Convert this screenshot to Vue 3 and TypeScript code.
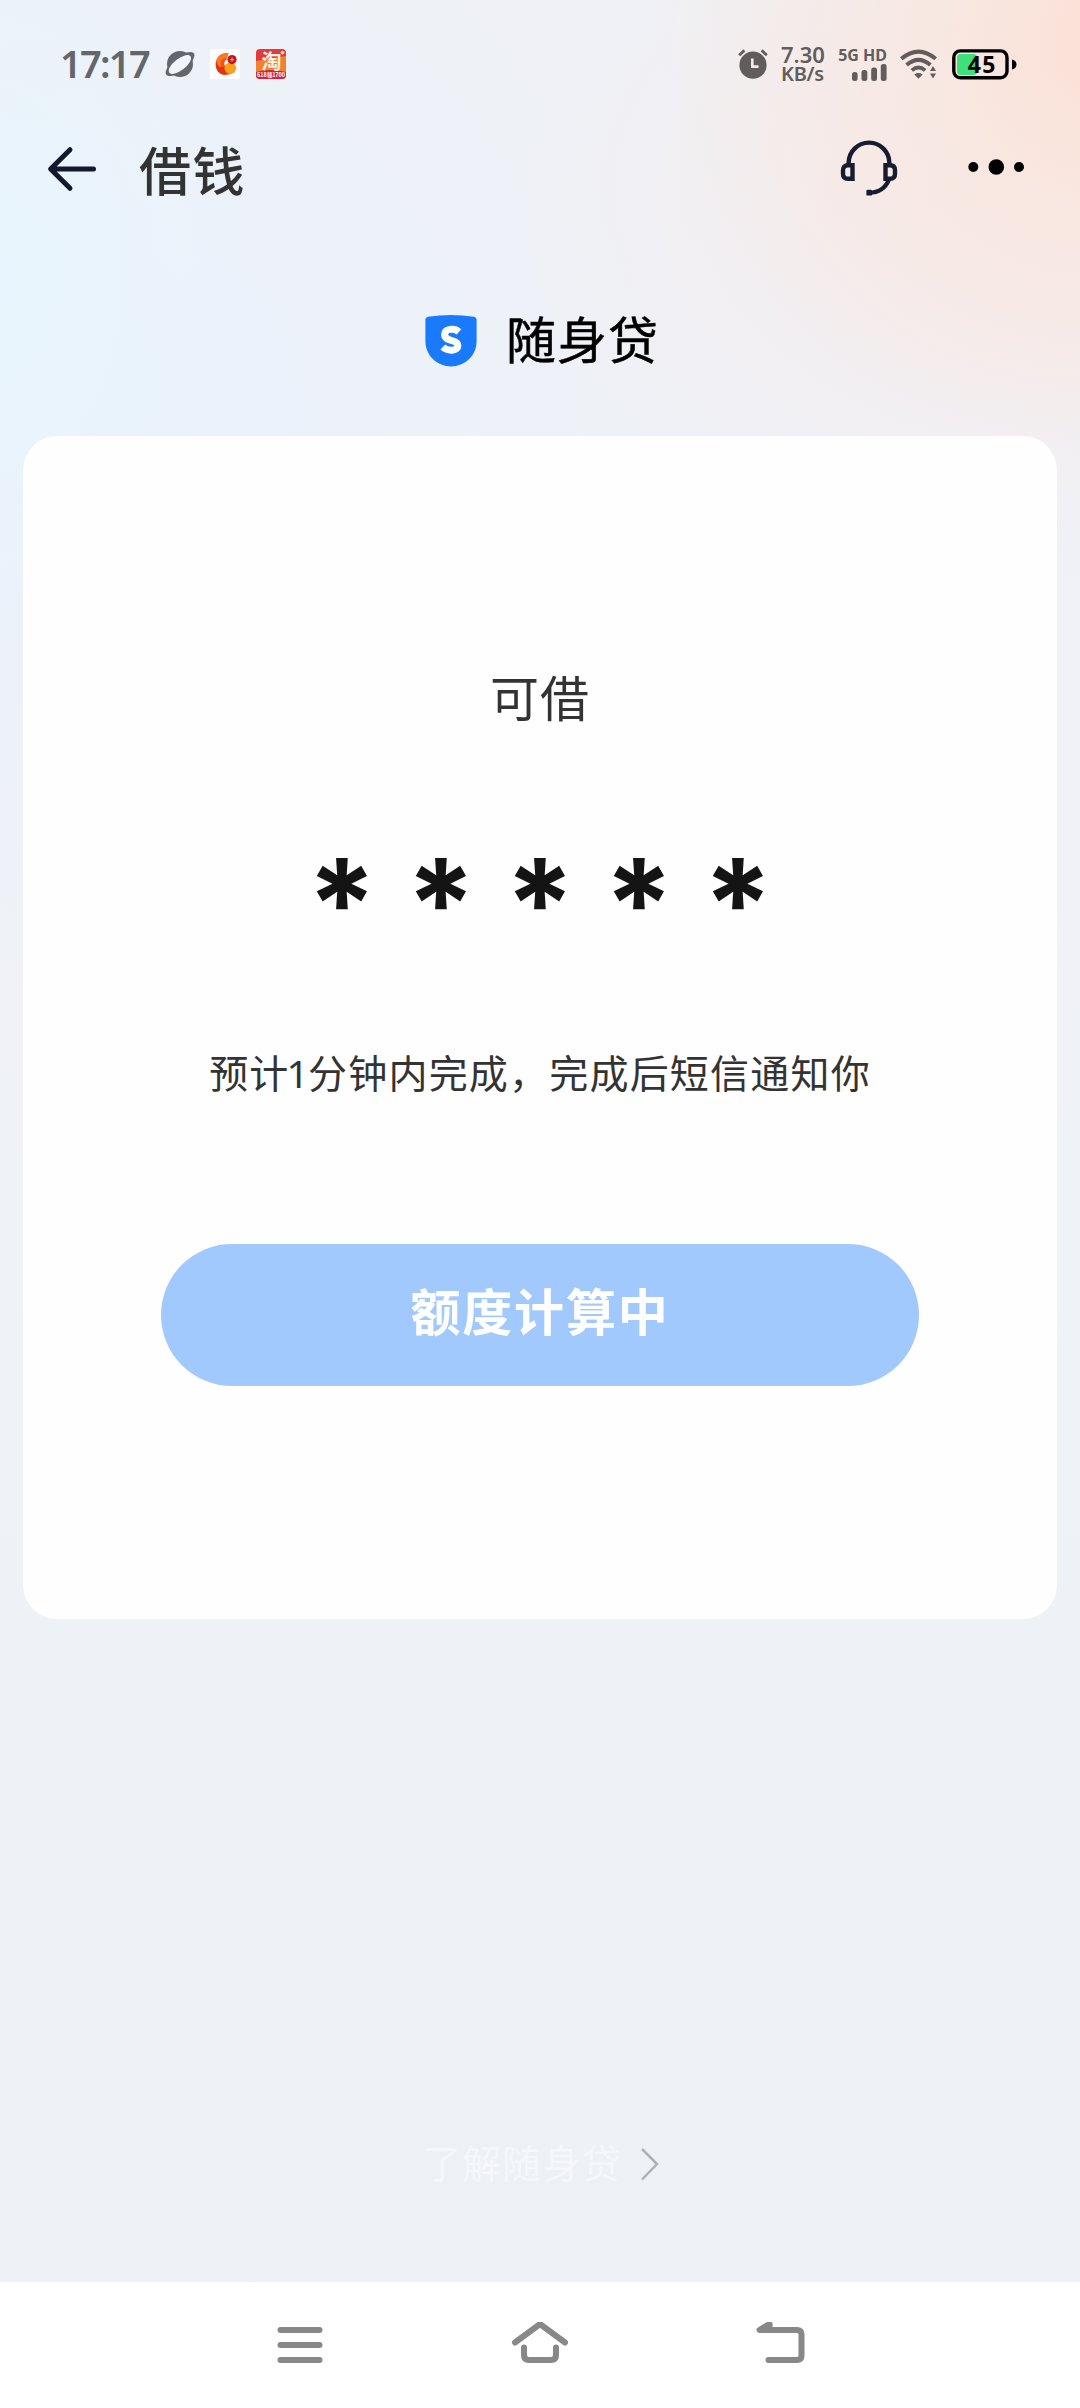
<script setup lang="ts">
const mask: string[] = ['*', '*', '*', '*', '*']
const navLines: number[] = [8, 23, 38]
</script>

<template>
  <div class="page">
    <div class="status">
      <span class="time">17:17</span>
      <svg class="planet" width="30" height="28" viewBox="0 0 30 28">
        <circle cx="15" cy="14" r="13" fill="#63666b" />
        <ellipse cx="15" cy="14" rx="17.4" ry="7" transform="rotate(-38 15 14)" fill="#63666b" />
        <ellipse cx="14.6" cy="14.3" rx="13.4" ry="5.8" transform="rotate(-38 15 14)" fill="#f0f4fb" />
      </svg>
      <svg class="app-a" width="30" height="30" viewBox="0 0 30 30">
        <rect width="30" height="30" rx="3" fill="#fff" />
        <path d="M18.500 4.200A10.600 10.600 0 0 0 6 12.500C4.800 19 8 25.500 15 25.800L17.500 19C13.500 17 13.500 12.500 16.500 10.500Z" fill="#f4501c" />
        <path d="M6 12.500C4.800 19 8 25.500 15 25.800C19.500 26 23 24.500 24.500 22L17 17.500Q10 20 6 12.500z" fill="#e5301a" />
        <circle cx="20.300" cy="19.200" r="5.800" fill="#fba01c" />
        <path d="M7 9.500C10 5.500 14 4 18.500 4.200L16.500 9C11 9 9.500 13 11.500 18.500C7.500 17 6 13 7 9.500z" fill="#fa7a1e" />
        <circle cx="22" cy="10.600" r="4.600" fill="#c81422" />
        <path d="M22 8.600v4M20 10.600h4" stroke="#f9a23a" stroke-width="1.200" />
      </svg>
      <svg class="app-b" width="30" height="30" viewBox="0 0 30 30">
        <rect width="30" height="30" rx="4" fill="#e23a3a" />
        <path d="M0 12L30 7v16H0z" fill="#f0812f" />
        <path d="M0 23q15-4 30 0v3q0 4-4 4H4q-4 0-4-4z" fill="#d6203f" />
        <circle cx="26.500" cy="3.600" r="1.900" fill="#f7c9b0" />
        <text x="15.500" y="20" text-anchor="middle" class="tao">淘</text>
        <text x="15" y="28" text-anchor="middle" class="promo">618领1700</text>
      </svg>
      <span class="grow"></span>
      <svg class="alarm" width="30" height="30" viewBox="0 0 30 30">
        <circle cx="15" cy="16.200" r="13.600" fill="#625d5d" />
        <path d="M1.200 6.200l5.200-4.800M28.800 6.200l-5.200-4.800" stroke="#625d5d" stroke-width="2.800" />
        <path d="M14.300 9.400v8.200h6.200" fill="none" stroke="#f6eae8" stroke-width="2.600" />
      </svg>
      <div class="speed"><span>7.30</span><span class="unit">KB/s</span></div>
      <div class="signal">
        <span>5G HD</span>
        <svg width="35" height="17" viewBox="0 0 35 17">
          <g fill="#625d5d">
            <rect x="0" y="8" width="5.600" height="9" rx="2.500" />
            <rect x="9.500" y="6" width="5.800" height="11" rx="2.500" />
            <rect x="19.200" y="3.600" width="5.800" height="13.400" rx="2.500" />
            <rect x="28.800" y="0" width="5.800" height="17" rx="2.500" />
          </g>
        </svg>
      </div>
      <svg class="wifi" width="37" height="30" viewBox="0 0 37 30">
        <g fill="none" stroke="#625d5d" stroke-width="4">
          <path d="M1.300 9.800Q18.500-4.600 35.700 9.800" />
          <path d="M6.600 16Q18.500 5.600 30.400 16" />
          <path d="M11.800 21.400Q18.500 15.600 25.200 21.400" stroke-width="3.700" />
        </g>
        <path d="M14.400 25.400q4.100-2.600 8.200 0l-4.100 4.400z" fill="#625d5d" />
        <path d="M30 22l3-5 3 5zM30 24.500h6l-3 5z" fill="#625d5d" />
      </svg>
      <svg class="battery" width="65" height="31" viewBox="0 0 65 31">
        <rect x="5" y="5" width="20" height="21" rx="3.500" fill="#3fe07c" />
        <rect x="1.800" y="1.900" width="53.200" height="26.900" rx="6.500" fill="none" stroke="#000" stroke-width="3.400" />
        <path d="M60 10.500q4.500 1 4.500 5t-4.500 5z" fill="#000" />
        <text x="30.300" y="23.700" text-anchor="middle" class="level">45</text>
      </svg>
    </div>

    <header class="bar">
      <svg width="50" height="50" viewBox="0 0 50 50" class="back">
        <path d="M24 5.700L4.600 25 24 44.300M5.500 25H47.500" fill="none" stroke="#14182e" stroke-width="5" stroke-linecap="round" stroke-linejoin="round" />
      </svg>
      <h1>借钱</h1>
      <span class="grow"></span>
      <svg width="58" height="58" viewBox="0 0 58 58" class="service">
        <g fill="none" stroke="#171c31" stroke-width="4.400">
          <path d="M8.600 24.500V23a20.400 20.400 0 0 1 40.800 0v1.500" />
          <path d="M12.500 25.200H8q-5 0-5 5v3.600q0 5 5 5h4.500z" />
          <path d="M45.500 25.200H50q5 0 5 5v3.600q0 5-5 5h-4.500z" />
          <path d="M49 39.500Q43.500 52.700 29 52.700" />
        </g>
        <rect x="26.400" y="49.800" width="5.600" height="5.800" rx="1.200" fill="#171c31" />
      </svg>
      <svg width="58" height="18" viewBox="0 0 58 18" class="more">
        <circle cx="6.300" cy="9" r="5" /><circle cx="29.300" cy="9" r="7.800" /><circle cx="52" cy="9" r="5" />
      </svg>
    </header>

    <div class="brand">
      <svg width="52" height="52" viewBox="0 0 52 52">
        <path d="M.4 4.600Q.4 2.300 3 1.700Q26-1.500 49 1.700Q51.600 2.300 51.600 4.600V26C51.600 41 39.500 51.400 26 51.400S.4 41 .4 26z" fill="#1a7afc" />
        <path d="M34 16.800C29.500 12.800 19.600 13.400 19.600 19.600C19.600 27 32.800 24 32.800 30.700C32.800 36.400 22.500 36.400 17.800 32" fill="none" stroke="#fff" stroke-width="7" />
      </svg>
      <span>随身贷</span>
    </div>

    <main class="card">
      <p class="label">可借</p>
      <div class="amount"><span v-for="(m, i) in mask" :key="i">{{ m }}</span></div>
      <p class="hint">预计<span class="one">1</span>分钟内完成，完成后短信通知你</p>
      <button class="cta">额度计算中</button>
    </main>

    <footer class="more-link">
      <span>了解随身贷</span>
      <svg width="20" height="34" viewBox="0 0 20 34">
        <path d="M2 2l15 15L2 32.500" fill="none" stroke="#aeb0b4" stroke-width="2.500" />
      </svg>
    </footer>

    <nav class="sysnav">
      <svg width="50" height="46" viewBox="0 0 50 46">
        <path v-for="y in navLines" :key="y" :d="`M5.500 ${y}H44.500`" />
      </svg>
      <svg width="60" height="46" viewBox="0 0 60 46">
        <path d="M5 20L30 1.500 55 20" transform="translate(0 .5)" />
        <path d="M14 25.500V33q0 5 5 5h22q5 0 5-5V25.500" />
      </svg>
      <svg width="50" height="46" viewBox="0 0 50 46">
        <path d="M14.500 2L4.500 8H42Q46.500 8 46.500 12.500V33.500Q46.500 38 42 38H13.500" />
        <path d="M14.500 3.500L8 7.500" />
      </svg>
    </nav>
  </div>
</template>

<style>
body {
  margin: 0;
}
</style>

<style scoped>
.page {
  box-sizing: border-box;
  width: 1080px;
  height: 2408px;
  display: flex;
  flex-direction: column;
  overflow: hidden;
  font-family: "Noto Sans CJK SC", "Noto Sans", sans-serif;
  background:
    radial-gradient(ellipse 460px 420px at 1120px 40px, #fbe0d5 0%, rgba(250, 229, 220, 0.7) 40%, rgba(248, 236, 233, 0) 100%),
    radial-gradient(ellipse 560px 380px at 1080px 200px, rgba(247, 234, 232, 0.9) 0%, rgba(245, 237, 238, 0) 100%),
    radial-gradient(ellipse 280px 380px at -30px 270px, rgba(231, 246, 254, 0.85) 0%, rgba(233, 245, 254, 0) 100%),
    radial-gradient(ellipse 560px 560px at 100px 420px, #eaf2fc 0%, rgba(236, 243, 251, 0) 100%),
    linear-gradient(180deg, #eff1f6 0, #eff2f7 1200px, #edf1f6 100%);
}
p,
h1 {
  margin: 0;
  font-weight: 400;
}
svg {
  display: block;
  flex: none;
}
.grow {
  flex: 1;
}
.status {
  display: flex;
  align-items: center;
  height: 128px;
  padding: 0 63px 0 60px;
  box-sizing: border-box;
  color: #625d5d;
  font-family: "Noto Sans", sans-serif;
}
.time {
  width: 105px;
  padding-bottom: 3px;
  font-size: 38px;
  font-weight: 600;
  letter-spacing: -1.7px;
  line-height: 60px;
  color: #63666b;
}
.app-a {
  margin-left: 15px;
}
.app-b {
  margin-left: 16px;
}
.tao {
  font: 700 20px "Noto Sans CJK SC", sans-serif;
  fill: #fff3e2;
}
.promo {
  font: 700 5.5px "Noto Sans CJK SC", sans-serif;
  fill: #fff;
}
.speed {
  display: flex;
  flex-direction: column;
  width: 46px;
  margin-left: 13px;
  font-size: 22px;
  font-weight: 600;
  line-height: 20px;
}
.unit {
  font-size: 20px;
  letter-spacing: -0.3px;
}
.signal {
  display: flex;
  flex-direction: column;
  align-items: flex-end;
  width: 50px;
  margin-left: 10px;
  padding-bottom: 1px;
  font-size: 16px;
  font-weight: 700;
  line-height: 17px;
  white-space: nowrap;
}
.wifi {
  margin-left: 13px;
}
.battery {
  margin-left: 15px;
}
.level {
  font: 700 23px "Noto Sans", sans-serif;
  letter-spacing: 1.5px;
  fill: #000;
}
.bar {
  display: flex;
  align-items: center;
  height: 82px;
  padding: 0 55px 0 46px;
}
.bar h1 {
  margin-left: 43px;
  padding-bottom: 1px;
  font-size: 52px;
  font-weight: 500;
  letter-spacing: 1.5px;
  line-height: 80px;
  color: #333;
}
.more {
  margin: 0 0 4px 69px;
}
.brand {
  display: flex;
  align-items: center;
  gap: 29px;
  height: 60px;
  margin: 101px 0 0 425px;
  font-size: 50px;
  letter-spacing: 1px;
  color: #000;
}
.brand span {
  padding-bottom: 8px;
  -webkit-text-stroke: 0.5px #000;
}
.card {
  display: flex;
  flex-direction: column;
  align-items: center;
  box-sizing: border-box;
  width: 1034px;
  height: 1183px;
  margin: 65px 23px 0;
  padding-top: 220px;
  border-radius: 34px;
  background: #fefefe;
}
.label {
  font-size: 49px;
  letter-spacing: 1px;
  line-height: 80px;
  color: #333;
}
.amount {
  display: flex;
  height: 100px;
  margin-top: 118px;
  font-family: Inter, sans-serif;
  font-size: 125px;
  font-weight: 700;
  line-height: 100px;
  color: #141414;
}
.amount span {
  width: 99px;
  text-align: center;
}
.hint {
  height: 60px;
  margin-top: 87px;
  font-size: 39px;
  letter-spacing: 1.2px;
  line-height: 60px;
  color: #333;
  white-space: nowrap;
}
.one {
  margin: 0 -2px 0 -3px;
  font-family: "Noto Sans", sans-serif;
  line-height: 1;
}
.cta {
  width: 758px;
  height: 142px;
  margin-top: 143px;
  padding: 0 0 12px;
  border: 0;
  border-radius: 71px;
  background: #a1c9fe;
  color: #fff;
  font: 700 50px "Noto Sans CJK SC", sans-serif;
  letter-spacing: 1.8px;
}
.more-link {
  display: flex;
  align-items: center;
  justify-content: center;
  height: 60px;
  margin-top: 515px;
  padding-left: 2px;
  gap: 18px;
  font-size: 39px;
  letter-spacing: 0.8px;
  line-height: 60px;
  color: #f5f7fb;
}
.more-link span {
  padding-bottom: 6px;
}
.sysnav {
  display: flex;
  align-items: center;
  justify-content: center;
  gap: 185px;
  height: 126px;
  margin-top: auto;
  background: #fff;
}
.sysnav path {
  fill: none;
  stroke: #888;
  stroke-width: 6;
  stroke-linecap: round;
  stroke-linejoin: round;
}
</style>
